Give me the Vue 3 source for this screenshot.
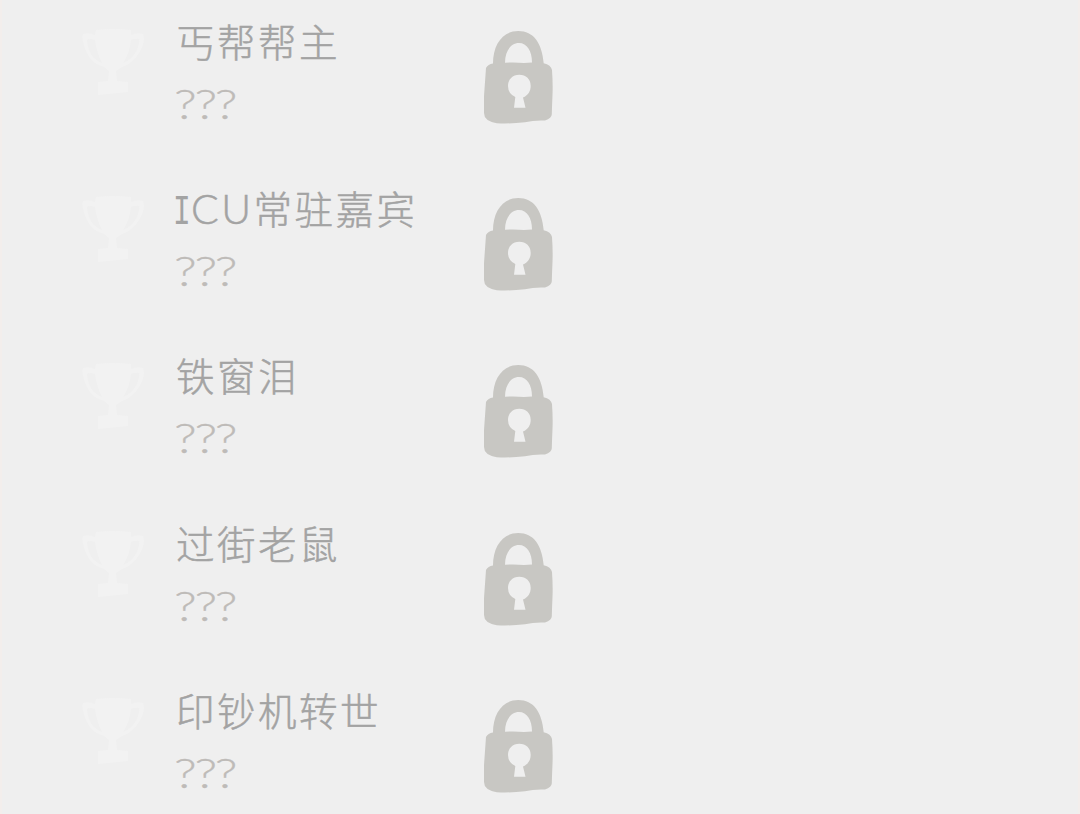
<template>
  <div class="achievements">
    <div v-for="item in items" :key="item.title" class="achievement">
      <svg class="trophy" viewBox="0 0 62 67" aria-hidden="true">
        <path
          fill-rule="evenodd"
          d="M14 1Q31-1 49 1V6Q55 3 61 5Q64 13 57 24Q51 34 40 38L34 42L35 52L46 53V63L16 66V53L26 52L27 42L22 38Q10 35 5 24Q-1 12 1 5Q7 3 13 6ZM13 11Q7 9 5 11Q6 23 12 29Q16 33 20 34Q15 25 13 11ZM49 11Q47 26 41 34Q51 30 55 21Q58 13 57 10Q53 9 49 11Z"
        />
      </svg>
      <div class="info">
        <div class="title">
          <span v-if="item.prefix" class="latin"><span class="initial">{{ item.prefix[0] }}</span>{{ item.prefix.slice(1) }}</span>{{ item.title }}
        </div>
        <div class="desc">???</div>
      </div>
      <svg class="lock" viewBox="0 0 69 93" aria-hidden="true">
        <path
          fill-rule="evenodd"
          d="M9 32.5C9 13 19 0 34.3 0S58 12 59.7 32.3Q67 34 68 39Q69 53 68.5 64T67.8 83Q68 87 61 89.5Q50 89 41 91.3Q25 93 12.7 92.2Q0 90 0 82V65L2 37Q4 33 9 32.5ZM21 31.7Q31 31 40 32L48 31.5C48 20 43 12 35 12S21 20 21 31.7ZM31.3 66L30 76.8H41.5L39 66.5C44 64.5 46.7 60 46.7 55C46.7 48.2 42 43.8 35.3 43.8S24 48.5 24 55Q24 62.5 31.3 66Z"
        />
      </svg>
    </div>
  </div>
</template>

<script setup>
const items = [
  { title: '丐帮帮主' },
  { prefix: 'ICU', title: '常驻嘉宾' },
  { title: '铁窗泪' },
  { title: '过街老鼠' },
  { title: '印钞机转世' }
]
</script>

<style>
body {
  margin: 0;
  background: #efefef;
}
</style>

<style scoped>
.achievements {
  box-sizing: border-box;
  height: 814px;
  overflow: hidden;
  background: #efefef;
  border-left: 2px solid #f3eeec;
  border-right: 2px solid #f3eeec;
}

.achievement {
  box-sizing: border-box;
  display: flex;
  align-items: flex-start;
  height: 167.2px;
  padding-left: 80px;
}

.trophy {
  width: 62px;
  height: 67px;
  margin-top: 29px;
  fill: #f2f2f2;
}

.info {
  width: 308px;
  padding-top: 11px;
  margin-left: 32px;
  white-space: nowrap;
}

.title {
  height: 60px;
  color: #a3a3a3;
  font-family: "Noto Sans CJK SC", sans-serif;
  font-size: 38.5px;
  font-weight: 300;
  line-height: 59px;
  letter-spacing: 2.5px;
  -webkit-text-stroke: 0.5px #a3a3a3;
}

.latin {
  display: inline-block;
  height: 60px;
  font-family: Lato, sans-serif;
  font-size: 41px;
  line-height: 61px;
  letter-spacing: 2.5px;
  vertical-align: top;
}

/* the capital I carries serifs */
.initial {
  display: inline-block;
  width: 15px;
  font-family: "Liberation Mono", monospace;
  font-size: 42px;
  line-height: 1;
  letter-spacing: 0;
  transform: translateX(-3px) scaleX(0.7);
  transform-origin: left;
  -webkit-text-stroke: 0;
}

.desc {
  height: 60px;
  color: #bebbb8;
  font-family: Lato, sans-serif;
  font-size: 42px;
  font-weight: 300;
  line-height: 65px;
  letter-spacing: -1.8px;
  transform: translateX(-2px) scaleX(1.25);
  transform-origin: left;
  -webkit-text-stroke: 0.3px #bebbb8;
}

.lock {
  width: 69px;
  height: 93px;
  margin-top: 31px;
  fill: #c8c7c3;
}
</style>
